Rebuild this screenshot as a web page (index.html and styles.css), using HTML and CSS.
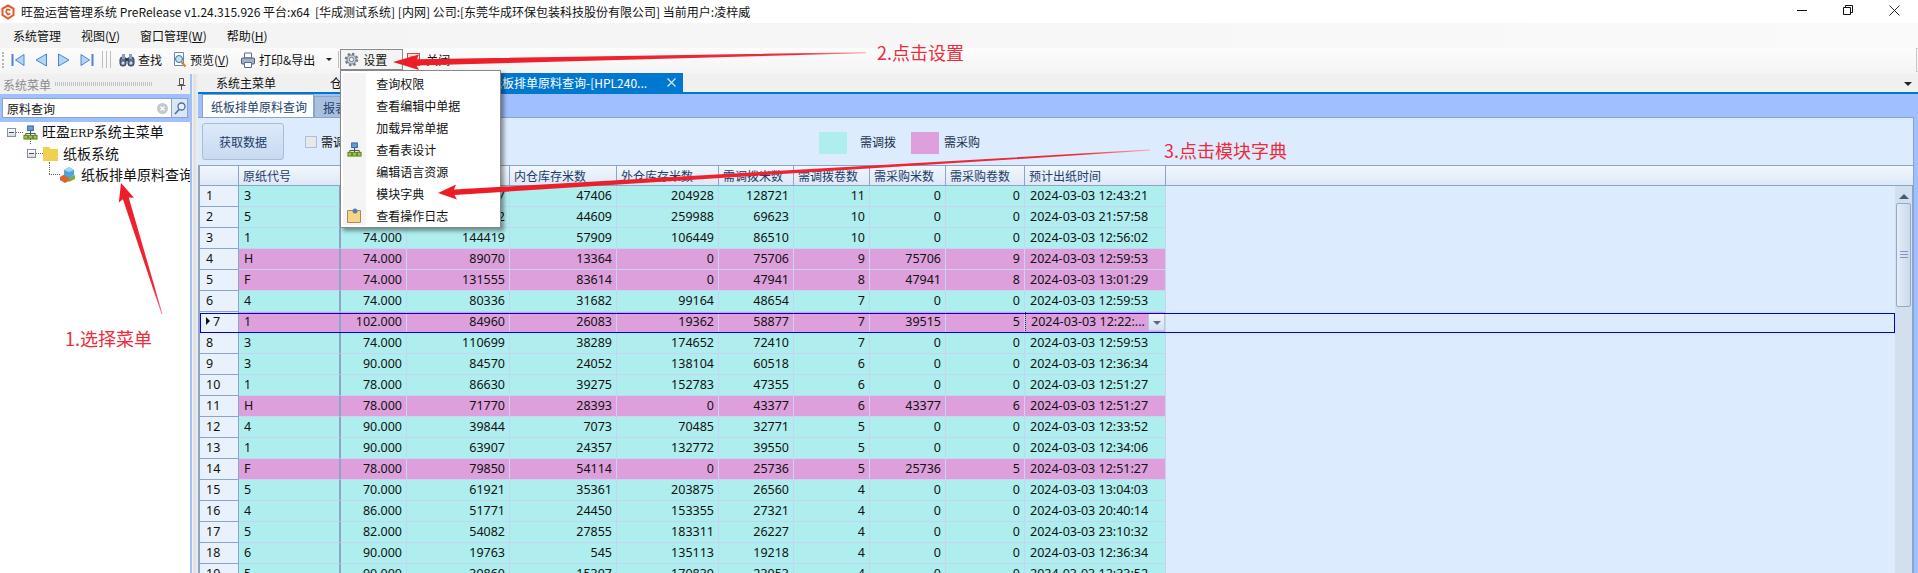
FILE: index.html
```html
<!DOCTYPE html>
<html lang="zh-CN">
<head>
    <meta charset="UTF-8">
    <title>旺盈运营管理系统</title>
    <link rel="stylesheet" href="styles.css">
</head>
<body>
<svg class="defs" width="0" height="0">
    <symbol id="org" viewBox="0 0 16 16">
        <path d="M8 6v3M3 11V9h10v2M8 9v2" fill="none" stroke="#444"/>
        <rect x="5" y="1" width="6" height="5" fill="#6a9be0" stroke="#2f5c9e"/>
        <rect x="1" y="11" width="4" height="4" fill="#9ec63f" stroke="#5c7d16"/>
        <rect x="6" y="11" width="4" height="4" fill="#9ec63f" stroke="#5c7d16"/>
        <rect x="11" y="11" width="4" height="4" fill="#9ec63f" stroke="#5c7d16"/>
    </symbol>
</svg>
<div class="app">
    <header class="titlebar">
        <svg class="logo" width="14" height="16" viewBox="0 0 14 16"><path d="M7 1.5 12.5 4.5V11L7 14.5 1.5 11V4.5Z" fill="none" stroke="#e8552b" stroke-width="2"/><path d="M9.5 6 6 5.5 5 8l2 2.5 2.5-1" fill="none" stroke="#e8552b" stroke-width="1.6"/></svg>
        <span class="title-text">旺盈运营管理系统 PreRelease v1.24.315.926 平台:x64  [华成测试系统] [内网] 公司:[东莞华成环保包装科技股份有限公司] 当前用户:凌梓威</span>
        <div class="win-btns">
            <svg width="10" height="10" viewBox="0 0 10 10"><path d="M0 5.5h10" stroke="#111"/></svg>
            <svg width="10" height="10" viewBox="0 0 10 10"><path d="M.5 2.5h7v7h-7zM2.5 2.5v-2h7v7h-2" fill="none" stroke="#111"/></svg>
            <svg width="11" height="11" viewBox="0 0 11 11"><path d="M.5.5l10 10M10.5.5l-10 10" stroke="#111" stroke-width=".9"/></svg>
        </div>
    </header>

    <nav class="menubar">
        <span>系统管理</span>
        <span>视图(<u>V</u>)</span>
        <span>窗口管理(<u>W</u>)</span>
        <span>帮助(<u>H</u>)</span>
    </nav>

    <div class="toolbar">
        <i class="grip"></i>
        <svg class="nav-icon" viewBox="0 0 14 14"><path d="M1.5 1v12" stroke="#4a86cf" stroke-width="2"/><path d="M13 1.5v11L4.5 7Z" fill="#b6d3f5" stroke="#4a86cf"/></svg>
        <svg class="nav-icon" viewBox="0 0 14 14"><path d="M12.5 1v12L2 7Z" fill="#b6d3f5" stroke="#4a86cf"/></svg>
        <svg class="nav-icon" viewBox="0 0 14 14"><path d="M1.5 1v12L12 7Z" fill="#b6d3f5" stroke="#4a86cf"/></svg>
        <svg class="nav-icon" viewBox="0 0 14 14"><path d="M12.5 1v12" stroke="#4a86cf" stroke-width="2"/><path d="M1 1.5v11L9.500 7Z" fill="#b6d3f5" stroke="#4a86cf"/></svg>
        <i class="sep sep-nav"></i><i class="sep"></i><i class="sep"></i>
        <div class="tool tool-find">
            <svg width="16" height="16" viewBox="0 0 16 16"><rect x="1" y="5" width="6" height="9" rx="2.500" fill="#5d6f8c" stroke="#2f3d55"/><rect x="9" y="5" width="6" height="9" rx="2.500" fill="#5d6f8c" stroke="#2f3d55"/><rect x="3" y="2" width="3" height="5" fill="#8d9db5"/><rect x="10" y="2" width="3" height="5" fill="#8d9db5"/><rect x="6.500" y="6" width="3" height="3" fill="#2f3d55"/><circle cx="4" cy="11" r="1.500" fill="#cfe0f5"/><circle cx="12" cy="11" r="1.500" fill="#cfe0f5"/></svg>
            <span>查找</span>
        </div>
        <div class="tool tool-preview">
            <svg width="14" height="16" viewBox="0 0 14 16"><path d="M1.500.5h9v13h-9z" fill="#fff" stroke="#6f87a8"/><circle cx="6" cy="7" r="3.500" fill="#bfe0f7" stroke="#3f6f9f"/><path d="M8.500 10l4 4.500" stroke="#c98a2a" stroke-width="2"/></svg>
            <span>预览(<u>V</u>)</span>
        </div>
        <div class="tool tool-print">
            <svg width="14" height="16" viewBox="0 0 14 16"><path d="M3.500 1h7v5h-7z" fill="#fff" stroke="#5a6f8c"/><rect x=".5" y="6" width="13" height="6" rx="1" fill="#9fb2cc" stroke="#4b5f7c"/><path d="M3.500 10.500h7v5h-7z" fill="#fff" stroke="#5a6f8c"/></svg>
            <span>打印&amp;导出</span>
        </div>
        <i class="drop-tri"></i>
        <i class="sep sep-tail"></i>
        <div class="tool-settings">
            <svg width="15" height="15" viewBox="0 0 16 16"><circle cx="8" cy="8" r="6" fill="#c9ced6" stroke="#6d7786" stroke-width="2.500" stroke-dasharray="2.400 2.300"/><circle cx="8" cy="8" r="4.800" fill="#c9ced6" stroke="#7c8694"/><circle cx="8" cy="8" r="2.300" fill="#f2f3f5" stroke="#6d7786"/></svg>
            <span>设置</span>
            <ul class="dropdown">
                <li>查询权限</li>
                <li>查看编辑中单据</li>
                <li>加载异常单据</li>
                <li><svg class="menu-icon" width="15" height="15"><use href="#org"/></svg>查看表设计</li>
                <li>编辑语言资源</li>
                <li>模块字典</li>
                <li><svg class="menu-icon" width="14" height="15" viewBox="0 0 14 15"><path d="M.5 2.500h13v12H.5z" fill="#f6d584" stroke="#a98a55"/><circle cx="8" cy="3" r="2.500" fill="#4f7fc0"/></svg>查看操作日志</li>
            </ul>
        </div>
        <div class="tool tool-close">
            <svg width="13" height="13" viewBox="0 0 13 13"><rect x=".5" y=".5" width="12" height="12" fill="#f6dcdc" stroke="#c0504d"/><path d="M6.500 10 2.500 6c-1-2 2-4 4-2 2-2 5 0 4 2Z" fill="#e05a5a"/></svg>
            <span>关闭</span>
        </div>
        <i class="toolbar-end"></i>
    </div>

    <div class="workspace">
        <aside class="side">
            <div class="side-head">
                <span>系统菜单</span>
                <i class="side-dots"></i>
                <svg width="9" height="12" viewBox="0 0 9 12"><path d="M2.500.5h4v6h-4zM.5 7.500h8M4.500 8v4" fill="#eee" stroke="#555"/></svg>
            </div>
            <div class="search">
                <div class="search-box">
                    <span>原料查询</span>
                    <svg width="11" height="11" viewBox="0 0 11 11"><circle cx="5.500" cy="5.500" r="5.500" fill="#c3c7cf"/><path d="M3.500 3.500l4 4M7.500 3.500l-4 4" stroke="#fff" stroke-width="1.300"/></svg>
                </div>
                <div class="search-btn">
                    <svg width="12" height="13" viewBox="0 0 12 13"><circle cx="7.500" cy="4.500" r="3.500" fill="#e6f0fb" stroke="#4d6f9c" stroke-width="1.300"/><path d="M5 7.500 1 12" stroke="#4d6f9c" stroke-width="1.600"/></svg>
                </div>
            </div>
            <ul class="tree">
                <li class="node node-root">
                    <i class="expander"></i><i class="dots"></i>
                    <svg width="15" height="15"><use href="#org"/></svg>
                    <span>旺盈<span class="erp">ERP</span>系统主菜单</span>
                </li>
                <li class="node node-folder">
                    <i class="expander"></i><i class="dots"></i>
                    <svg width="15" height="14" viewBox="0 0 15 14"><path d="M0 0h6l2 2h7v12H0z" fill="#f2d04f"/></svg>
                    <span>纸板系统</span>
                </li>
                <li class="node node-leaf">
                    <i class="dots dots-leaf"></i>
                    <svg width="16" height="16" viewBox="0 0 16 16"><path d="M0 10 5 7l4 3v4l-4 2-5-3z" fill="#e0622c"/><path d="M9 10l6-2v4l-6 3z" fill="#78b043"/><path d="M4 3l5-3 5 3v5l-5 3-5-3z" fill="#4fa6dc"/><path d="M4 3l5 2 5-2-5-3z" fill="#9fd6f2"/></svg>
                    <span>纸板排单原料查询</span>
                </li>
            </ul>
        </aside>
        <div class="splitter"></div>

        <main class="doc">
            <div class="doc-tabs">
                <span class="doc-tab doc-tab-home">系统主菜单</span>
                <span class="doc-tab doc-tab-stock">仓库报表</span>
                <span class="doc-tab doc-tab-active">
                    <span>纸板排单原料查询-[HPL240...</span>
                    <svg width="9" height="9" viewBox="0 0 9 9"><path d="M.5.500l8 8M8.500.500l-8 8" stroke="#cfe6f8" stroke-width="1.200"/></svg>
                </span>
                <i class="doc-tabs-more"></i>
            </div>
            <div class="sub-tabs">
                <span class="sub-tab sub-tab-active">纸板排单原料查询</span>
                <span class="sub-tab">报表</span>
            </div>
            <div class="panel">
                <div class="query-bar">
                    <button class="fetch-btn">获取数据</button>
                    <i class="check"></i>
                    <span class="check-label">需调拨</span>
                    <i class="swatch swatch-move"></i>
                    <span class="legend-label">需调拨</span>
                    <i class="swatch swatch-buy"></i>
                    <span class="legend-label legend-label-buy">需采购</span>
                </div>
                <div class="grid">
                    <table class="grid-head">
                        <colgroup><col class="c0"><col class="c1"><col class="c2"><col class="c3"><col class="c4"><col class="c5"><col class="c6"><col class="c7"><col class="c8"><col class="c9"><col class="c10"><col></colgroup>
                        <tr><th></th><th>原纸代号</th><th></th><th></th><th>内仓库存米数</th><th>外仓库存米数</th><th>需调拨米数</th><th>需调拨卷数</th><th>需采购米数</th><th>需采购卷数</th><th>预计出纸时间</th><th></th></tr>
                    </table>
                    <div class="grid-body">
                        <div class="rows">
                            <table class="grid-data">
                                <colgroup><col class="c0"><col class="c1"><col class="c2"><col class="c3"><col class="c4"><col class="c5"><col class="c6"><col class="c7"><col class="c8"><col class="c9"><col class="c10"><col></colgroup>
                                <tr class="move"><th>1</th><td>3</td><td></td><td>7</td><td>47406</td><td>204928</td><td>128721</td><td>11</td><td>0</td><td>0</td><td>2024-03-03 12:43:21</td><td></td></tr>
                                <tr class="move"><th>2</th><td>5</td><td></td><td>2</td><td>44609</td><td>259988</td><td>69623</td><td>10</td><td>0</td><td>0</td><td>2024-03-03 21:57:58</td><td></td></tr>
                                <tr class="move"><th>3</th><td>1</td><td>74.000</td><td>144419</td><td>57909</td><td>106449</td><td>86510</td><td>10</td><td>0</td><td>0</td><td>2024-03-03 12:56:02</td><td></td></tr>
                                <tr class="buy"><th>4</th><td>H</td><td>74.000</td><td>89070</td><td>13364</td><td>0</td><td>75706</td><td>9</td><td>75706</td><td>9</td><td>2024-03-03 12:59:53</td><td></td></tr>
                                <tr class="buy"><th>5</th><td>F</td><td>74.000</td><td>131555</td><td>83614</td><td>0</td><td>47941</td><td>8</td><td>47941</td><td>8</td><td>2024-03-03 13:01:29</td><td></td></tr>
                                <tr class="move"><th>6</th><td>4</td><td>74.000</td><td>80336</td><td>31682</td><td>99164</td><td>48654</td><td>7</td><td>0</td><td>0</td><td>2024-03-03 12:59:53</td><td></td></tr>
                                <tr class="buy"><th><i class="row-arrow"></i>7</th><td>1</td><td>102.000</td><td>84960</td><td>26083</td><td>19362</td><td>58877</td><td>7</td><td>39515</td><td>5</td><td class="editing"><span>2024-03-03 12:22:...</span><i class="combo"></i></td><td></td></tr>
                                <tr class="move"><th>8</th><td>3</td><td>74.000</td><td>110699</td><td>38289</td><td>174652</td><td>72410</td><td>7</td><td>0</td><td>0</td><td>2024-03-03 12:59:53</td><td></td></tr>
                                <tr class="move"><th>9</th><td>3</td><td>90.000</td><td>84570</td><td>24052</td><td>138104</td><td>60518</td><td>6</td><td>0</td><td>0</td><td>2024-03-03 12:36:34</td><td></td></tr>
                                <tr class="move"><th>10</th><td>1</td><td>78.000</td><td>86630</td><td>39275</td><td>152783</td><td>47355</td><td>6</td><td>0</td><td>0</td><td>2024-03-03 12:51:27</td><td></td></tr>
                                <tr class="buy"><th>11</th><td>H</td><td>78.000</td><td>71770</td><td>28393</td><td>0</td><td>43377</td><td>6</td><td>43377</td><td>6</td><td>2024-03-03 12:51:27</td><td></td></tr>
                                <tr class="move"><th>12</th><td>4</td><td>90.000</td><td>39844</td><td>7073</td><td>70485</td><td>32771</td><td>5</td><td>0</td><td>0</td><td>2024-03-03 12:33:52</td><td></td></tr>
                                <tr class="move"><th>13</th><td>1</td><td>90.000</td><td>63907</td><td>24357</td><td>132772</td><td>39550</td><td>5</td><td>0</td><td>0</td><td>2024-03-03 12:34:06</td><td></td></tr>
                                <tr class="buy"><th>14</th><td>F</td><td>78.000</td><td>79850</td><td>54114</td><td>0</td><td>25736</td><td>5</td><td>25736</td><td>5</td><td>2024-03-03 12:51:27</td><td></td></tr>
                                <tr class="move"><th>15</th><td>5</td><td>70.000</td><td>61921</td><td>35361</td><td>203875</td><td>26560</td><td>4</td><td>0</td><td>0</td><td>2024-03-03 13:04:03</td><td></td></tr>
                                <tr class="move"><th>16</th><td>4</td><td>86.000</td><td>51771</td><td>24450</td><td>153355</td><td>27321</td><td>4</td><td>0</td><td>0</td><td>2024-03-03 20:40:14</td><td></td></tr>
                                <tr class="move"><th>17</th><td>5</td><td>82.000</td><td>54082</td><td>27855</td><td>183311</td><td>26227</td><td>4</td><td>0</td><td>0</td><td>2024-03-03 23:10:32</td><td></td></tr>
                                <tr class="move"><th>18</th><td>6</td><td>90.000</td><td>19763</td><td>545</td><td>135113</td><td>19218</td><td>4</td><td>0</td><td>0</td><td>2024-03-03 12:36:34</td><td></td></tr>
                                <tr class="move"><th>19</th><td>5</td><td>90.000</td><td>39860</td><td>15307</td><td>170839</td><td>23053</td><td>4</td><td>0</td><td>0</td><td>2024-03-03 12:33:52</td><td></td></tr>
                            </table>
                            <div class="cur-row"></div>
                        </div>
                        <div class="scrollbar">
                            <i class="scroll-up"></i>
                            <div class="scroll-thumb"><b></b><b></b><b></b></div>
                        </div>
                    </div>
                </div>
            </div>
        </main>
    </div>

    <!-- red notes drawn on top of the screenshot -->
    <svg class="arrows" width="1918" height="573" viewBox="0 0 1918 573">
        <defs>
            <linearGradient id="fade2" x1="393" x2="866" y1="0" y2="0" gradientUnits="userSpaceOnUse"><stop offset="0" stop-color="#ec1c26"/><stop offset=".85" stop-color="#ee2a36"/><stop offset="1" stop-color="#f8a8ae"/></linearGradient>
            <linearGradient id="fade3" x1="438" x2="1150" y1="0" y2="0" gradientUnits="userSpaceOnUse"><stop offset="0" stop-color="#ec1c26"/><stop offset=".9" stop-color="#ee2a36"/><stop offset="1" stop-color="#f8a8ae"/></linearGradient>
            <linearGradient id="fade1" x1="0" x2="0" y1="183" y2="314" gradientUnits="userSpaceOnUse"><stop offset="0" stop-color="#ec1c26"/><stop offset=".8" stop-color="#ee2a36"/><stop offset="1" stop-color="#f4858c"/></linearGradient>
        </defs>
        <polygon points="393,62 419,54.500 416.500,59.200 866,52.200 866,53.200 416.500,65.500 419,70" fill="url(#fade2)"/>
        <polygon points="438,193 456,184.500 454,189.500 1150,149.600 1150,150.600 454.500,195 457,199.500" fill="url(#fade3)"/>
        <polygon points="121,183 134,197.800 128.700,197.400 162.500,314 161.500,314 122.900,199.200 118.800,202.600" fill="url(#fade1)"/>
    </svg>
    <span class="note note-menu">1.选择菜单</span>
    <span class="note note-settings">2.点击设置</span>
    <span class="note note-dict">3.点击模块字典</span>
</div>
</body>
</html>
```

FILE: styles.css
```css
* { box-sizing: border-box; }
html, body { margin: 0; height: 100%; overflow: hidden; }
body {
    font-family: "Noto Sans CJK SC", "Noto Sans", sans-serif;
    font-size: 12px;
    color: #111;
    background: #fff;
}
ul { list-style: none; margin: 0; padding: 0; }
i { display: block; font-style: normal; flex: none; }
svg { display: block; flex: none; }
.defs { position: absolute; }

.app {
    position: relative;
    width: 1918px;
    height: 573px;
    display: flex;
    flex-direction: column;
    overflow: hidden;
}

/* title bar */
.titlebar {
    height: 23px;
    flex: none;
    display: flex;
    align-items: center;
    padding-left: 1px;
    background: #fff;
}
.title-text { margin-left: 6px; white-space: pre; line-height: 23px; }
.win-btns {
    margin-left: auto;
    display: flex;
    align-items: center;
    gap: 36px;
    padding-right: 18px;
    padding-bottom: 3px;
}

/* menu */
.menubar {
    height: 25px;
    flex: none;
    display: flex;
    align-items: center;
    padding-left: 13px;
    gap: 20px;
    background: linear-gradient(to right, #f3f3f3, #fafafa);
}

/* toolbar */
.toolbar {
    height: 26px;
    flex: none;
    display: flex;
    align-items: center;
    padding-bottom: 3px;
    background: linear-gradient(#fcfcfc, #f4f4f4);
}
.grip {
    width: 2px;
    height: 16px;
    margin: 0 7px 0 2px;
    border-left: 2px dotted #b5b5b5;
}
.nav-icon { width: 14px; height: 14px; margin-right: 9px; }
.sep { width: 1px; height: 17px; background: #bdbdbd; margin-right: 3px; }
.sep-nav { margin-left: -1px; }
.tool { display: flex; align-items: center; gap: 3px; white-space: nowrap; }
.tool-find { margin-left: 5px; }
.tool-preview { margin-left: 11px; }
.tool-print { margin-left: 12px; }
.tool-print svg { margin-right: 1px; }
.drop-tri {
    margin-left: 11px;
    border-left: 3px solid transparent;
    border-right: 3px solid transparent;
    border-top: 3px solid #222;
}
.sep-tail { margin: 0 1px 0 6px; }
.tool-settings {
    position: relative;
    width: 63px;
    height: 21px;
    display: flex;
    align-items: center;
    gap: 4px;
    padding-left: 3px;
    border: 1px solid #8c8c8c;
    background: #f4f4f4;
}
.tool-close { margin-left: 4px; gap: 6px; }
.toolbar-end {
    margin-left: auto;
    width: 2px;
    height: 24px;
    border: 1px solid #c8c8c8;
    border-right: 0;
}

/* settings dropdown */
.dropdown {
    position: absolute;
    top: 20px;
    left: -1px;
    z-index: 10;
    width: 161px;
    height: 158px;
    padding: 2px;
    background: linear-gradient(to right, #f4f4f4 23px, #fff 23px);
    background-origin: content-box;
    background-repeat: no-repeat;
    background-color: #fff;
    border: 1px solid #888;
    box-shadow: 3px 3px 4px rgba(0, 0, 0, .4);
}
.dropdown li {
    position: relative;
    height: 22px;
    line-height: 21px;
    padding-left: 33px;
    white-space: nowrap;
}
.menu-icon { position: absolute; left: 4px; top: 3px; }

/* work area */
.workspace { flex: 1; display: flex; min-height: 0; }

.side {
    width: 192px;
    flex: none;
    display: flex;
    flex-direction: column;
    background: #fff;
    border-right: 2px solid #a3c0f5;
}
.side-head {
    height: 20px;
    flex: none;
    display: flex;
    align-items: center;
    padding-left: 3px;
    color: #8a8a8a;
    background: #f0f0f0;
}
.side-dots {
    width: 97px;
    height: 4px;
    margin: 0 25px 0 4px;
    background: repeating-linear-gradient(to right, #c4c4c4 0 1px, transparent 1px 2px);
}
.search {
    height: 28px;
    flex: none;
    display: flex;
    padding: 4px 2px 4px;
    background: #9fbfff;
}
.search-box {
    width: 170px;
    display: flex;
    align-items: center;
    justify-content: space-between;
    padding: 0 3px 0 4px;
    background: #fff;
    border: 1px solid #8aa5c8;
}
.search-btn {
    width: 16px;
    display: flex;
    align-items: center;
    justify-content: center;
    background: #dbe7f6;
    border: 1px solid #8aa5c8;
    border-left: 0;
}

/* tree */
.tree { font-size: 14px; white-space: nowrap; overflow: hidden; }
.node {
    position: relative;
    height: 21px;
    display: flex;
    align-items: center;
    line-height: 21px;
}
.node-root { padding-left: 7px; }
.node-root svg { margin-right: 4px; }
.node-folder { padding-left: 27px; }
.node-folder svg { margin-right: 5px; }
.node-leaf { padding-left: 49px; }
.node-leaf svg { margin-right: 5px; }
.expander {
    position: relative;
    width: 9px;
    height: 9px;
    border: 1px solid #8a8f98;
    background: linear-gradient(#fff, #d9dde3);
}
.expander::after {
    content: "";
    position: absolute;
    left: 1px;
    right: 1px;
    top: 3px;
    height: 1px;
    background: #2f4f7f;
}
.dots { width: 7px; border-top: 1px dotted #666; }
.dots-leaf { width: 11px; }
.node-root::after, .node-leaf::before {
    content: "";
    position: absolute;
    border-left: 1px dotted #666;
}
.node-root::after { left: 30px; top: 16px; height: 6px; }
.node-leaf::before { left: 49px; top: -2px; height: 12px; }
.erp { font-family: "DejaVu Serif", serif; font-size: 11px; }

.splitter {
    width: 6px;
    flex: none;
    background: linear-gradient(to right, #f4f4f4, #dfdfdf 40%, #f0f0f0);
}

/* document area */
.doc {
    flex: 1;
    min-width: 0;
    display: flex;
    flex-direction: column;
    background: #9fbfff;
}
.doc-tabs {
    height: 18px;
    flex: none;
    position: relative;
    display: flex;
    background: #f0f0f0;
}
.doc-tab { line-height: 18px; white-space: nowrap; }
.doc-tab-home { width: 96px; padding-left: 18px; }
.doc-tab-stock { width: 190px; padding-left: 36px; }
.doc-tab-active {
    width: 199px;
    display: flex;
    align-items: center;
    justify-content: space-between;
    margin-top: -1px;
    height: 19px;
    padding: 0 7px 0 6px;
    color: #fff;
    background: #0078d0;
}
.doc-tabs-more {
    position: absolute;
    right: 6px;
    top: 8px;
    border-left: 4px solid transparent;
    border-right: 4px solid transparent;
    border-top: 4px solid #222;
}
.sub-tabs {
    height: 25px;
    flex: none;
    display: flex;
    align-items: flex-end;
    padding-left: 4px;
    border-top: 2px solid #0078d0;
}
.sub-tab {
    height: 21px;
    width: 60px;
    line-height: 21px;
    padding-left: 8px;
    color: #24406e;
    background: #a9bfe0;
    border: 1px solid #8aa5c8;
    border-bottom: 0;
}
.sub-tab-active {
    width: 112px;
    height: 23px;
    line-height: 23px;
    padding-left: 8px;
    background: #fff;
    border-color: #8aa5c8;
}

.panel {
    flex: 1;
    min-height: 0;
    margin-right: 4px;
    display: flex;
    flex-direction: column;
    background: #dcebfe;
    border-top: 1px solid #8aa5c8;
    border-right: 1px solid #8aa5c8;
}
.query-bar {
    height: 47px;
    flex: none;
    display: flex;
    align-items: center;
    padding-left: 4px;
}
.fetch-btn {
    width: 82px;
    height: 37px;
    padding: 0;
    color: #1d3b68;
    font: inherit;
    background: linear-gradient(#dce9fa, #c9daf0);
    border: 1px solid #a9bcd8;
    border-radius: 3px;
}
.check {
    width: 12px;
    height: 12px;
    margin-left: 21px;
    background: #e8e8e8;
    border: 1px solid #a9c0e0;
}
.check-label { margin-left: 4px; }
.swatch { width: 28px; height: 22px; margin-top: 3px; }
.swatch-move { margin-left: 462px; background: #afeeee; }
.swatch-buy { margin-left: 15px; background: #dda0dd; }
.legend-label { margin-left: 13px; color: #22324f; }
.legend-label-buy { margin-left: 5px; }

/* data grid */
.grid {
    flex: 1;
    min-height: 0;
    display: flex;
    flex-direction: column;
    overflow: hidden;
    border-left: 2px solid #8aa5c8;
}
.grid table {
    width: 100%;
    table-layout: fixed;
    border-collapse: separate;
    border-spacing: 0;
}
.c0 { width: 39px; }
.c1 { width: 102px; }
.c2 { width: 66px; }
.c3 { width: 103px; }
.c4 { width: 107px; }
.c5 { width: 102px; }
.c6 { width: 75px; }
.c7 { width: 76px; }
.c8 { width: 76px; }
.c9 { width: 79px; }
.c10 { width: 141px; }

.grid-head { flex: none; }
.grid-head th {
    height: 21px;
    padding: 0 0 0 4px;
    font-weight: 400;
    text-align: left;
    color: #1d3b68;
    white-space: nowrap;
    overflow: hidden;
    background: linear-gradient(#f2f7fe, #dde8f6);
    border-top: 1px solid #8aa5c8;
    border-right: 1px solid #8aa5c8;
    border-bottom: 1px solid #8aa5c8;
}
.grid-head th:last-child { border-right: 0; }

.grid-body { flex: 1; min-height: 0; display: flex; }
.rows { position: relative; flex: 1; min-width: 0; }
.grid-data { font-family: "Noto Sans", sans-serif; font-size: 12.5px; }
.grid-data th, .grid-data td {
    height: 21px;
    padding: 0;
    line-height: 20px;
    white-space: nowrap;
    overflow: hidden;
    font-weight: 400;
}
.grid-data th {
    position: relative;
    text-align: left;
    padding-left: 6px;
    background: #e9f2fc;
    border-right: 1px solid #8aa5c8;
    border-bottom: 1px solid #8aa5c8;
}
.grid-data td {
    text-align: right;
    padding-right: 4px;
    border-right: 1px solid #c4d4f2;
    border-bottom: 1px solid #c4d4f2;
}
.grid-data td:nth-child(2) {
    text-align: left;
    padding-left: 5px;
    border-right: 2px solid #8aa5c8;
}
.grid-data td:nth-child(11) { text-align: left; padding-left: 5px; }
.grid-data td:last-child { border: 0; background: transparent; }
.move td { background: #afeeee; }
.buy td { background: #dda0dd; border-color: #c8d4f0; }
.row-arrow {
    display: inline-block;
    margin-right: 3px;
    vertical-align: 1px;
    border-top: 4px solid transparent;
    border-bottom: 4px solid transparent;
    border-left: 4px solid #111;
}
.grid-data td.editing {
    position: relative;
    border-left: 1px dotted #333;
}
.combo {
    position: absolute;
    right: 0;
    top: 1px;
    bottom: 1px;
    width: 17px;
    background: linear-gradient(#eef4fc, #d5e1f0);
    border: 1px solid #b8c8dc;
}
.combo::after {
    content: "";
    position: absolute;
    left: 4px;
    top: 7px;
    border-left: 4px solid transparent;
    border-right: 4px solid transparent;
    border-top: 4px solid #5a6a86;
}
.cur-row {
    position: absolute;
    left: 0;
    right: 0;
    top: 127px;
    height: 20px;
    border: 1px solid #0000e6;
    pointer-events: none;
}

.scrollbar {
    width: 18px;
    flex: none;
    display: flex;
    flex-direction: column;
    align-items: center;
    padding-top: 8px;
    background: #d2e0ee;
    border-right: 1px solid #8aa5d0;
}
.scroll-up {
    border-left: 5px solid transparent;
    border-right: 5px solid transparent;
    border-bottom: 5px solid #44587c;
}
.scroll-thumb {
    width: 15px;
    height: 104px;
    margin-top: 4px;
    display: flex;
    flex-direction: column;
    align-items: center;
    justify-content: center;
    gap: 1px;
    background: linear-gradient(to right, #e4edf7, #cbdaeb);
    border: 1px solid #92aacd;
    border-radius: 2px;
}
.scroll-thumb b { width: 8px; height: 1px; background: #7d98c2; margin-bottom: 1px; }

/* annotations */
.arrows { position: absolute; left: 0; top: 0; z-index: 20; pointer-events: none; }
.note {
    position: absolute;
    z-index: 21;
    font-size: 18px;
    line-height: 24px;
    color: #ef2b3a;
    white-space: nowrap;
}
.note-menu { left: 65px; top: 326px; }
.note-settings { left: 877px; top: 40px; }
.note-dict { left: 1164px; top: 138px; }
```
